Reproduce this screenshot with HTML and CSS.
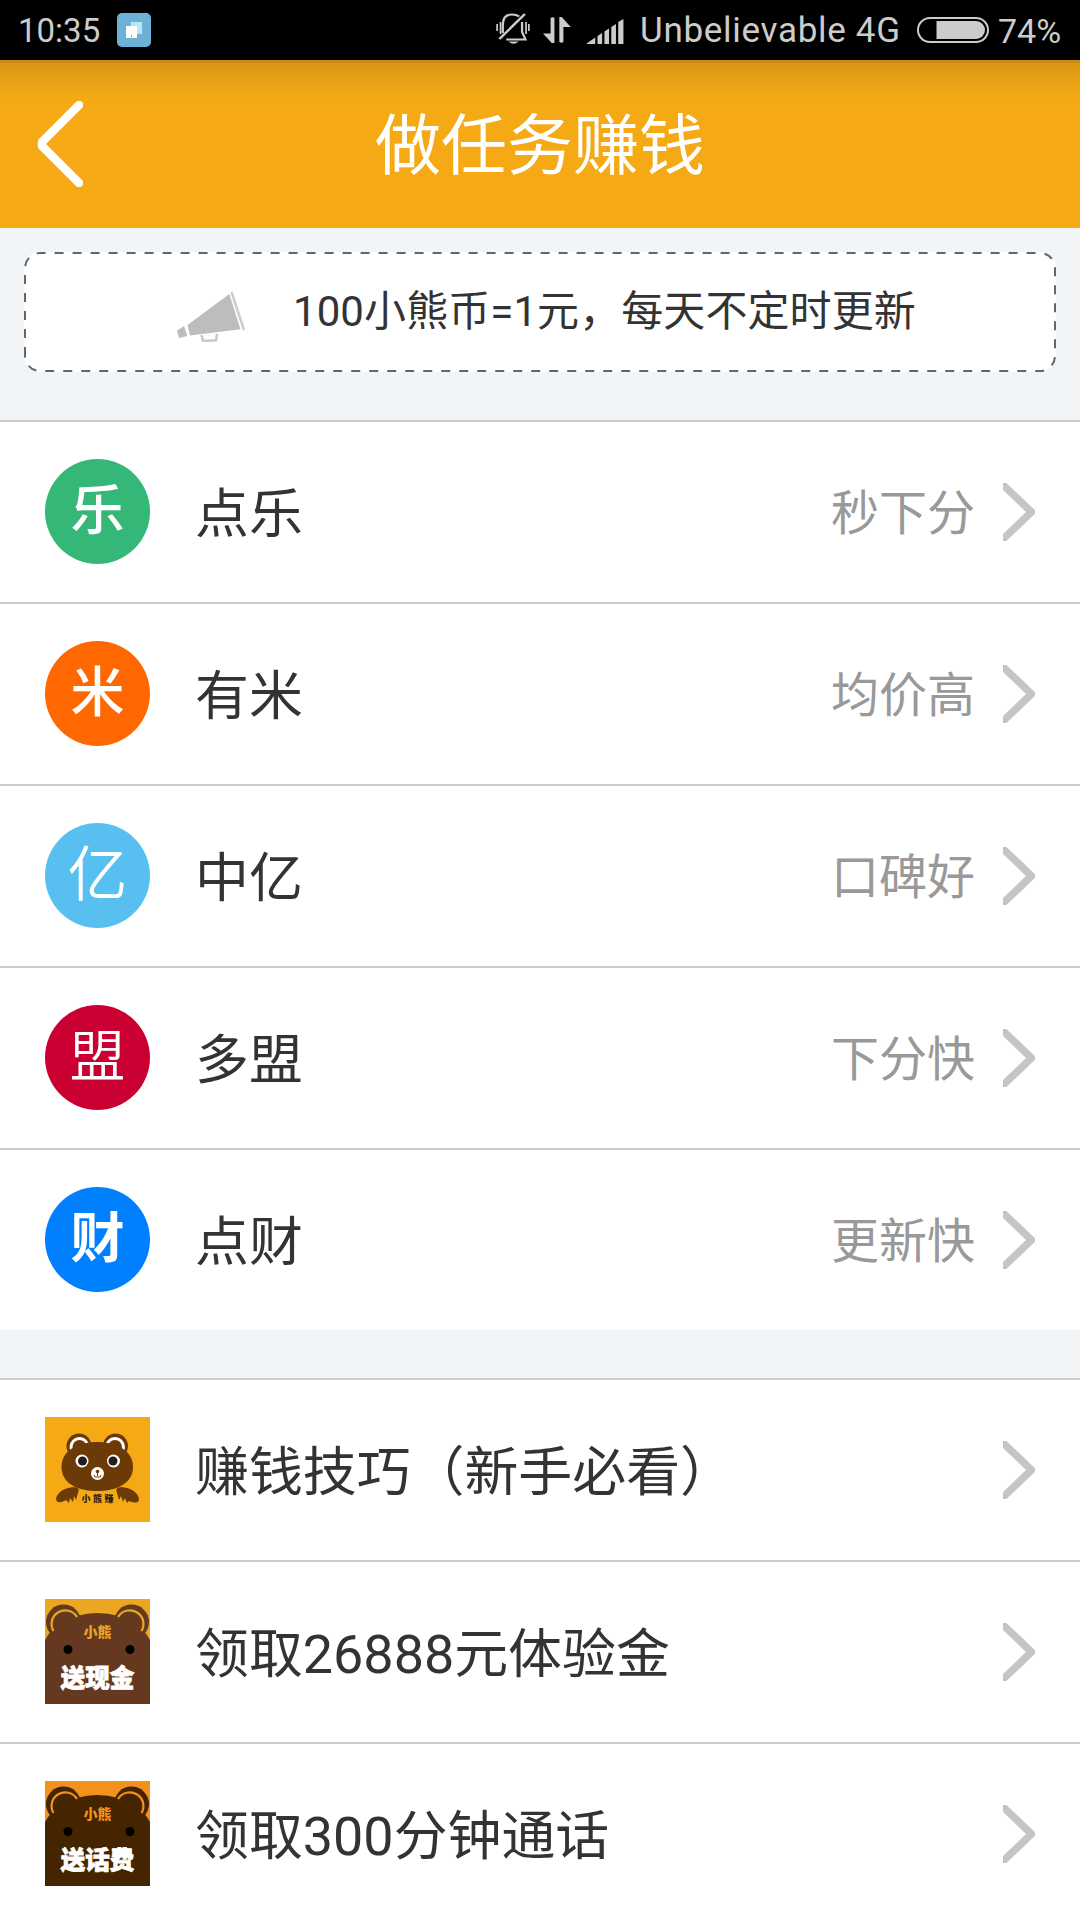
FILE: index.html
```html
<!DOCTYPE html>
<html lang="zh-CN">
<head>
    <meta charset="UTF-8">
    <meta name="viewport" content="width=device-width, initial-scale=1.0">
    <title>做任务赚钱</title>
    <link rel="stylesheet" href="styles.css">
</head>
<body>
    <div class="status-bar">
        <span class="time">10:35</span>
        <svg class="app-badge" width="34" height="34" viewBox="0 0 34 34">
            <rect width="34" height="34" rx="5" fill="#6db2d5"/>
            <rect x="14" y="9" width="11" height="12" fill="#b9e5fa"/>
            <rect x="9" y="13" width="11" height="12" fill="#fff"/>
            <rect x="14" y="22" width="1" height="2" fill="#6db2d5"/>
        </svg>
        <svg class="mute" width="34" height="32" viewBox="0 0 30 32" preserveAspectRatio="none" fill="none" stroke="#ccc" stroke-width="2">
            <path d="M3 26L25.500 1" stroke-width="2.300"/>
            <path d="M6 20V12C6 5 9 1.500 14 1.500Q18 1.500 20.500 3.500M23 9V19L26 26.500H9"/>
            <path d="M1 11v7M4 9v12M26.500 9v12M29 11v7" stroke-width="1.500"/>
            <path d="M11 28.500h9q-4.500 4.500-9 0z" fill="#ccc" stroke="none"/>
        </svg>
        <svg class="data" width="28" height="26" viewBox="0 0 24 26" preserveAspectRatio="none" fill="#ccc">
            <path d="M6.500 1q1.700-1.600 3.300 0v25H7.500L0 16.500h6.500zM14 25V0h2l7.800 10H17.500v15q-1.700 1.500-3.500 0z"/>
        </svg>
        <svg class="signal" width="38" height="25" viewBox="0 0 33 25" preserveAspectRatio="none" fill="#ccc">
            <path d="M0 25L8 18.500V25zM10 25V17l4-3v11zM16 25V12.500l4-3V25zM22 25V8l4-3v20zM28 25V3l4.500-3v25z"/>
        </svg>
        <span class="carrier">Unbelievable 4G</span>
        <svg class="battery" width="72" height="26" viewBox="0 0 72 26">
            <rect x="1" y="1" width="70" height="24" rx="12" fill="none" stroke="#ccc" stroke-width="2"/>
            <path d="M19.500 4H59a9 9 0 0 1 0 18H19.500z" fill="#ccc"/>
        </svg>
        <span class="percent">74%</span>
    </div>

    <header class="header">
        <svg class="back" width="46" height="86" viewBox="0 0 46 86">
            <path d="M42 4L5 41v4L42 82" fill="none" stroke="#fff" stroke-width="8.500" stroke-linejoin="round" stroke-linecap="round"/>
        </svg>
        <h1>做任务赚钱</h1>
    </header>

    <div class="notice">
        <svg class="notice-border" width="1032" height="120" viewBox="0 0 1032 120">
            <path d="M1 104V16A15 15 0 0 1 16 1H1016A15 15 0 0 1 1031 16V104A15 15 0 0 1 1016 119H16A15 15 0 0 1 1 104Z"/>
        </svg>
        <svg class="horn" width="68" height="50" viewBox="0 0 68 50" fill="#bdbdbd">
            <path d="M10.500 33L52.300 2 63.500 37.300 13 43.500z"/>
            <path d="M0 38.700L7 34l3.500 10L2 46z"/>
            <path d="M24.500 43l1.500 6 13-.8 1-6.200" fill="none" stroke="#c8c8c8" stroke-width="2.500"/>
            <path d="M54.500 0L67 38" stroke="#ccc" stroke-width="2.500"/>
        </svg>
        <span class="notice-text">100小熊币=1元，每天不定时更新</span>
    </div>

    <ul class="list">
        <li class="row">
            <span class="logo green">乐</span>
            <span class="name">点乐</span>
            <span class="desc">秒下分</span>
            <svg class="arrow" viewBox="0 0 32 58"><path d="M-1 1L28.500 29-1 57"/></svg>
        </li>
        <li class="row">
            <span class="logo orange">米</span>
            <span class="name">有米</span>
            <span class="desc">均价高</span>
            <svg class="arrow" viewBox="0 0 32 58"><path d="M-1 1L28.500 29-1 57"/></svg>
        </li>
        <li class="row">
            <span class="logo sky">亿</span>
            <span class="name">中亿</span>
            <span class="desc">口碑好</span>
            <svg class="arrow" viewBox="0 0 32 58"><path d="M-1 1L28.500 29-1 57"/></svg>
        </li>
        <li class="row">
            <span class="logo red">盟</span>
            <span class="name">多盟</span>
            <span class="desc">下分快</span>
            <svg class="arrow" viewBox="0 0 32 58"><path d="M-1 1L28.500 29-1 57"/></svg>
        </li>
        <li class="row">
            <span class="logo blue">财</span>
            <span class="name">点财</span>
            <span class="desc">更新快</span>
            <svg class="arrow" viewBox="0 0 32 58"><path d="M-1 1L28.500 29-1 57"/></svg>
        </li>
    </ul>

    <ul class="list">
        <li class="row">
            <svg class="pic" viewBox="0 0 105 105">
                <rect width="105" height="105" fill="#f4a915"/>
                <!-- ears -->
                <g fill="#6b3a06">
                    <circle cx="34" cy="29" r="12.500"/>
                    <circle cx="70.500" cy="29" r="12.500"/>
                </g>
                <g fill="#6b3a06" stroke="#fff" stroke-width="3">
                    <circle cx="34.500" cy="30" r="8.500"/>
                    <circle cx="70" cy="30" r="8.500"/>
                </g>
                <!-- head -->
                <path d="M16.500 50C16.500 34 32 25 52 25S88 34 88 50 72 74 52 74 16.500 66 16.500 50z" fill="#6b3a06"/>
                <circle cx="37" cy="44" r="6.500" fill="#fff"/>
                <circle cx="68.500" cy="44" r="6.500" fill="#fff"/>
                <circle cx="37.500" cy="44" r="4.500" fill="#251c1c"/>
                <circle cx="68" cy="44" r="4.500" fill="#251c1c"/>
                <circle cx="52.500" cy="56.500" r="6.500" fill="#fff"/>
                <circle cx="52.500" cy="54.500" r="1.800" fill="#6b3a06"/>
                <path d="M52.500 55v4M49 58q0 3 3.500 2 3.500 1 3.500-2" fill="none" stroke="#6b3a06" stroke-width="1"/>
                <!-- paws -->
                <path d="M28 70Q36 70 33 76L31 83 29 79 28 85 25 81 24 86 21 83Q12 88 11 82 13 72 28 70z" fill="#6b3a06"/>
                <path d="M77 70Q69 70 72 76L74 83 76 79 78 85 80 81 82 86 84 84Q94 88 94 82 92 72 77 70z" fill="#6b3a06"/>
                <g class="pic-text" font-size="9" fill="#33200a">
                    <text x="36.500" y="84.500">小</text>
                    <text x="48" y="84.500">熊</text>
                    <text x="59.500" y="84.500">赚</text>
                </g>
            </svg>
            <span class="name">赚钱技巧（新手必看）</span>
            <svg class="arrow" viewBox="0 0 32 58"><path d="M-1 1L28.500 29-1 57"/></svg>
        </li>
        <li class="row">
            <svg class="pic" viewBox="0 0 105 105">
                <rect width="105" height="105" fill="#eba722"/>
                <g fill="#65391f">
                    <circle cx="18.500" cy="23" r="17.500"/>
                    <circle cx="86.500" cy="23" r="17.500"/>
                    <path d="M0 105V41Q5 31 16 25 31 14 52.500 14T89 25Q100 31 105 41V105z"/>
                </g>
                <g fill="none" stroke="#eba722" stroke-width="2.200">
                    <path d="M8.500 32A13.500 13.500 0 1 1 32 18"/>
                    <path d="M96.500 32A13.500 13.500 0 1 0 73 18"/>
                </g>
                <circle cx="23" cy="50.500" r="4.500"/>
                <circle cx="85" cy="50.500" r="4.500"/>
                <text class="pic-text" x="52.500" y="38" font-size="14" text-anchor="middle" fill="#eba722">小熊</text>
                <text class="pic-text pic-title" x="52.500" y="87.500" font-size="24.500" text-anchor="middle">送现金</text>
            </svg>
            <span class="name">领取26888元体验金</span>
            <svg class="arrow" viewBox="0 0 32 58"><path d="M-1 1L28.500 29-1 57"/></svg>
        </li>
        <li class="row">
            <svg class="pic" viewBox="0 0 105 105">
                <rect width="105" height="105" fill="#f1921e"/>
                <g fill="#452400">
                    <circle cx="18.500" cy="23" r="17.500"/>
                    <circle cx="86.500" cy="23" r="17.500"/>
                    <path d="M0 105V41Q5 31 16 25 31 14 52.500 14T89 25Q100 31 105 41V105z"/>
                </g>
                <g fill="none" stroke="#f1921e" stroke-width="2.200">
                    <path d="M8.500 32A13.500 13.500 0 1 1 32 18"/>
                    <path d="M96.500 32A13.500 13.500 0 1 0 73 18"/>
                </g>
                <circle cx="23" cy="50.500" r="4.500"/>
                <circle cx="85" cy="50.500" r="4.500"/>
                <text class="pic-text" x="52.500" y="38" font-size="14" text-anchor="middle" fill="#f1921e">小熊</text>
                <text class="pic-text pic-title" x="52.500" y="87.500" font-size="24.500" text-anchor="middle">送话费</text>
            </svg>
            <span class="name">领取300分钟通话</span>
            <svg class="arrow" viewBox="0 0 32 58"><path d="M-1 1L28.500 29-1 57"/></svg>
        </li>
    </ul>
</body>
</html>
```

FILE: styles.css
```css
* {
    margin: 0;
    padding: 0;
    box-sizing: border-box;
}

body {
    height: 1920px;
    overflow: hidden;
    background-color: #f1f5f8;
    font-family: Roboto, 'Noto Sans CJK SC', sans-serif;
    color: #333;
}

svg {
    display: block;
    flex-shrink: 0;
}

/* status bar */
.status-bar {
    display: flex;
    align-items: center;
    height: 60px;
    padding-left: 18px;
    background-color: #000;
    color: #ccc;
    font-size: 34px;
    line-height: 58px;
    white-space: nowrap;
}

.time {
    width: 99px;
    padding-top: 2px;
    font-size: 33px;
}

.mute {
    margin-left: 345px;
    margin-top: -2px;
}

.data {
    margin-left: 13px;
}

.signal {
    margin-left: 15px;
    margin-top: 2px;
}

.carrier {
    width: 265px;
    margin-left: 16px;
    padding-top: 2px;
    font-size: 35px;
    letter-spacing: 0.7px;
}

.battery {
    margin-left: 12px;
}

.percent {
    margin-left: 9px;
    padding-top: 2px;
}

/* header */
.header {
    position: relative;
    display: flex;
    align-items: center;
    justify-content: center;
    height: 168px;
    background: linear-gradient(#c98e13 0, #c98e13 3px, #d99813 3px, #f4a915 38px);
}

.header h1 {
    padding-top: 6px;
    color: #fff;
    font-size: 66px;
    font-weight: 400;
    line-height: 96px;
}

.back {
    position: absolute;
    left: 37px;
    top: 41px;
}

/* notice */
.notice {
    position: relative;
    display: flex;
    align-items: center;
    height: 120px;
    margin: 24px 24px 48px;
    padding-left: 153px;
    border-radius: 16px;
    background-color: #fff;
    font-size: 42px;
}

.notice-border {
    position: absolute;
    left: 0;
    top: 0;
}

.notice-border path {
    fill: none;
    stroke: #666;
    stroke-width: 2;
    stroke-dasharray: 9 9;
}

.horn {
    margin: 10px 48px 0 0;
}

.notice-text {
    padding-bottom: 9px;
    letter-spacing: 0.08px;
}

/* list */
.list {
    margin-bottom: 48px;
    list-style: none;
}

.row {
    display: flex;
    align-items: center;
    height: 182px;
    padding: 0 45px;
    border-top: 2px solid #ccc;
    background-color: #fff;
}

.logo {
    width: 105px;
    height: 105px;
    margin-bottom: 1px;
    border-radius: 50%;
    color: #fff;
    font-size: 54px;
    line-height: 105px;
    text-align: center;
}

.green {
    background-color: #35b877;
    font-weight: 500;
}

.orange {
    background-color: #ff6700;
    font-weight: 500;
}

.sky {
    background-color: #58c0f0;
    font-size: 60px;
    font-weight: 350;
}

.red {
    background-color: #cb0032;
    font-size: 56px;
    font-weight: 350;
}

.blue {
    background-color: #0080ff;
    font-weight: 700;
}

.pic {
    width: 105px;
    height: 105px;
    margin-bottom: 2px;
}

.pic-text {
    font-family: 'Noto Sans CJK SC', sans-serif;
    font-weight: 900;
}

.pic-title {
    fill: #fff;
    stroke: #fff;
    stroke-width: 0.8;
}

.name {
    flex: 1;
    margin-left: 45px;
    padding-bottom: 6px;
    font-size: 53.9px;
}

.desc {
    margin-right: 28px;
    padding-bottom: 6px;
    color: #999;
    font-size: 48px;
}

.arrow {
    width: 32px;
    height: 58px;
}

.arrow path {
    fill: none;
    stroke: #c5c5c5;
    stroke-width: 7.5;
}
```
